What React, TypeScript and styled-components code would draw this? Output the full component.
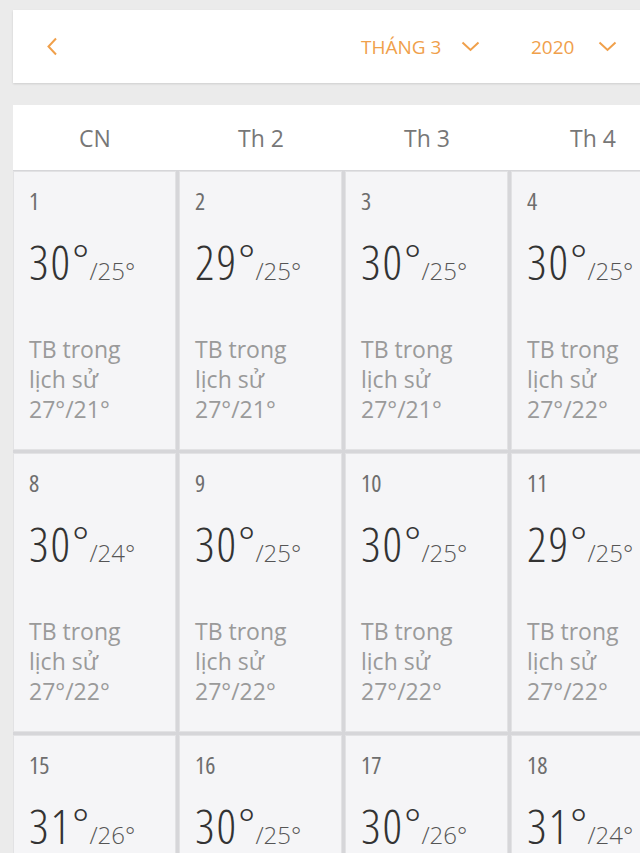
import React from "react";
import styled, { createGlobalStyle } from "styled-components";

const Global = createGlobalStyle`
  html, body { margin: 0; padding: 0; background: #ebebeb; }
  body {
    width: 640px;
    height: 853px;
    overflow: hidden;
    font-family: "Open Sans", "DejaVu Sans Condensed", sans-serif;
    font-stretch: 75%;
  }
`;

const ORANGE = "#f0a04b";

const Page = styled.div`
  padding: 10px 0 0 13px;
  width: 1300px;
`;

const HeaderBar = styled.div`
  display: flex;
  align-items: center;
  height: 73px;
  width: 700px;
  background: #fff;
  box-shadow: 0 1px 2px rgba(0, 0, 0, 0.12);
`;

const BackButton = styled.div`
  display: flex;
  align-items: center;
  margin-left: 33px;
  width: 12px;
  height: 20px;
`;

const Selector = styled.div<{ $offset: number }>`
  display: flex;
  align-items: center;
  margin-left: ${(p) => p.$offset}px;
  color: ${ORANGE};
  font-size: 19px;
  font-stretch: 100%;
`;

const SelectorText = styled.span<{ $w: number }>`
  display: inline-block;
  width: ${(p) => p.$w}px;
`;

const Calendar = styled.div`
  margin-top: 22px;
`;

const WeekRow = styled.div`
  display: grid;
  grid-template-columns: repeat(7, 166px);
  height: 65px;
  background: #fff;
  width: 1162px;
`;

const WeekLabel = styled.div`
  display: flex;
  align-items: center;
  justify-content: center;
  font-size: 23px;
  font-stretch: 100%;
  color: #777;
  padding-right: 2px;
`;

const Grid = styled.div`
  display: grid;
  grid-template-columns: repeat(7, 163px);
  grid-auto-rows: 279px;
  gap: 3px;
  padding: 1px 0 0 0;
  background: #d6d6d9;
  width: 1162px;
`;

const Cell = styled.div`
  background: #f5f5f7;
  border: 1px solid #e2e2e4;
  padding: 14px 0 0 15px;
  box-sizing: border-box;
`;

const DayNum = styled.div`
  font-size: 24px;
  color: #6e6e6e;
  line-height: 30px;
`;

const Temps = styled.div`
  margin-top: 19px;
  display: flex;
  align-items: baseline;
  color: #333;
`;

const High = styled.span`
  font-size: 48px;
  font-weight: 300;
  letter-spacing: 2px;
  line-height: 54px;
`;

const Low = styled.span`
  font-size: 24px;
  font-weight: 300;
  font-stretch: 100%;
  color: #555;
  margin-left: -2px;
`;

const History = styled.div`
  margin-top: 45px;
  font-size: 23px;
  font-stretch: 100%;
  line-height: 30px;
  color: #9a9a9a;
`;

const Chevron = ({ down }: { down?: boolean }) =>
  down ? (
    <svg width="19" height="11" viewBox="0 0 19 11">
      <path d="M1.5 1.5 L9.5 9 L17.5 1.5" fill="none" stroke={ORANGE} strokeWidth="2" />
    </svg>
  ) : (
    <svg width="12" height="19" viewBox="0 0 12 19">
      <path d="M10 1.5 L2.5 9.5 L10 17.5" fill="none" stroke={ORANGE} strokeWidth="2" />
    </svg>
  );

type Day = { d: number; hi: number; lo: number; h: string };

const rows: Day[][] = [
  [
    { d: 1, hi: 30, lo: 25, h: "27°/21°" },
    { d: 2, hi: 29, lo: 25, h: "27°/21°" },
    { d: 3, hi: 30, lo: 25, h: "27°/21°" },
    { d: 4, hi: 30, lo: 25, h: "27°/22°" },
    { d: 5, hi: 30, lo: 25, h: "27°/22°" },
    { d: 6, hi: 30, lo: 25, h: "27°/22°" },
    { d: 7, hi: 30, lo: 25, h: "27°/22°" },
  ],
  [
    { d: 8, hi: 30, lo: 24, h: "27°/22°" },
    { d: 9, hi: 30, lo: 25, h: "27°/22°" },
    { d: 10, hi: 30, lo: 25, h: "27°/22°" },
    { d: 11, hi: 29, lo: 25, h: "27°/22°" },
    { d: 12, hi: 30, lo: 25, h: "27°/22°" },
    { d: 13, hi: 30, lo: 25, h: "27°/22°" },
    { d: 14, hi: 30, lo: 25, h: "27°/22°" },
  ],
  [
    { d: 15, hi: 31, lo: 26, h: "27°/22°" },
    { d: 16, hi: 30, lo: 25, h: "27°/22°" },
    { d: 17, hi: 30, lo: 26, h: "27°/22°" },
    { d: 18, hi: 31, lo: 24, h: "27°/22°" },
    { d: 19, hi: 30, lo: 25, h: "27°/22°" },
    { d: 20, hi: 30, lo: 25, h: "27°/22°" },
    { d: 21, hi: 30, lo: 25, h: "27°/22°" },
  ],
];

const weekdays = ["CN", "Th 2", "Th 3", "Th 4", "Th 5", "Th 6", "Th 7"];

export default function App() {
  return (
    <>
      <Global />
      <Page>
        <HeaderBar>
          <BackButton>
            <Chevron />
          </BackButton>
          <Selector $offset={303}>
            <SelectorText $w={100}>THÁNG 3</SelectorText>
            <Chevron down />
          </Selector>
          <Selector $offset={51}>
            <SelectorText $w={67}>2020</SelectorText>
            <Chevron down />
          </Selector>
        </HeaderBar>
        <Calendar>
          <WeekRow>
            {weekdays.map((w) => (
              <WeekLabel key={w}>{w}</WeekLabel>
            ))}
          </WeekRow>
          <Grid>
            {rows.flat().map((c) => (
              <Cell key={c.d}>
                <DayNum>{c.d}</DayNum>
                <Temps>
                  <High>{c.hi}°</High>
                  <Low>/{c.lo}°</Low>
                </Temps>
                <History>
                  TB trong
                  <br />
                  lịch sử
                  <br />
                  {c.h}
                </History>
              </Cell>
            ))}
          </Grid>
        </Calendar>
      </Page>
    </>
  );
}
